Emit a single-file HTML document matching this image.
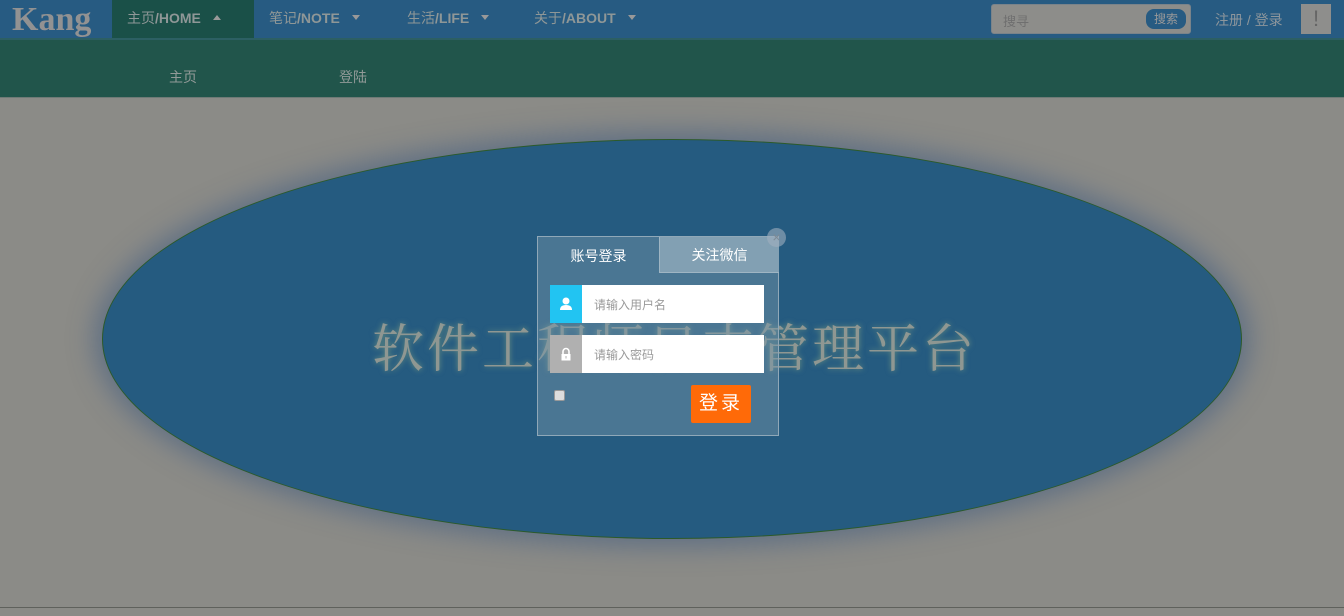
<!DOCTYPE html>
<html><head><meta charset="utf-8"><style>
*{margin:0;padding:0;box-sizing:border-box}
body{width:1344px;height:616px;overflow:hidden;background:#8b8b87;font-family:"Liberation Sans","Noto Sans CJK SC",sans-serif;position:relative}
.top{position:absolute;left:0;top:0;width:1344px;height:38px;background:#275b82}
.top .line{position:absolute;left:0;top:38px;width:1344px;height:2px;background:#2c5f63}
.logo{position:absolute;left:12px;top:0;font:bold 34px "Liberation Serif",serif;color:#929292;line-height:40px}
.nav{position:absolute;top:0;height:38px;line-height:36px;font-size:14px;color:#8f9797;font-weight:bold}
.nav b{font-weight:normal}
.tri{display:inline-block;width:0;height:0;border-left:4px solid transparent;border-right:4px solid transparent;border-top:5px solid #999;margin-left:12px;vertical-align:3px}
.up{border-top:none;border-bottom:5px solid #999}
.sub{position:absolute;left:0;top:40px;width:1344px;height:58px;background:#21554b;border-bottom:1px solid #6e7a76}
.sub span{position:absolute;top:27px;font-size:14px;color:#929a98}
.search{position:absolute;left:991px;top:4px;width:200px;height:30px;background:#8d8d8a;border:1px solid #7a838a;border-radius:3px}
.search span{position:absolute;left:11px;top:6px;font-size:13px;color:#6f6f6f}
.search i{position:absolute;right:4px;top:4px;width:40px;height:20px;border-radius:8px;background:#275b82;color:#999;font-style:normal;font-size:12px;text-align:center;line-height:20px}
.reg{position:absolute;left:1215px;top:10px;font-size:14px;color:#8d969c}
.ex{position:absolute;left:1301px;top:4px;width:30px;height:30px;background:#8e8e8c;color:#666;font-size:22px;text-align:center;line-height:30px}
.ell{position:absolute;left:102px;top:139px;width:1140px;height:400px;border-radius:50%;background:#255b80;border:1px solid #2c5a2a;box-shadow:0 0 25px 8px rgba(60,90,130,.55)}
.title{position:absolute;left:372px;top:307px;font-size:52px;color:#8f9792;letter-spacing:3px;font-family:"Noto Serif CJK SC",serif;text-shadow:0 0 6px rgba(140,170,130,.7)}
.box{position:absolute;left:537px;top:236px;width:242px;height:200px;background:rgba(120,150,170,.45);border:1px solid #90a8b8}
.t1{position:absolute;left:0;top:0;width:121px;height:36px;color:#fff;font-size:14px;text-align:center;line-height:38px}
.t2{position:absolute;left:121px;top:0;width:120px;height:36px;background:#82a0b3;border-left:1px solid #9fb5c3;border-bottom:1px solid #9fb5c3;color:#fff;font-size:14px;text-align:center;line-height:36px}
.in{position:absolute;left:12px;width:214px;height:38px;background:#fff}
.in .ic{position:absolute;left:0;top:0;width:32px;height:38px}
.in span{position:absolute;left:44px;top:11px;font-size:12px;color:#9a9a9a}
.btn{position:absolute;left:153px;top:148px;width:60px;height:38px;background:#ff6a08;border-radius:2px;color:#fff;font-size:19px;text-align:center;line-height:38px;letter-spacing:3px}
.cb{position:absolute;left:16px;top:153px;width:11px;height:11px;background:#ddd;border:1px solid #999;border-radius:2px}
.x{position:absolute;left:767px;top:228px;width:19px;height:19px;border-radius:50%;background:rgba(160,175,190,.6);color:#7d8a95;font-size:14px;text-align:center;line-height:19px}
.bl{position:absolute;left:0;top:607px;width:1344px;height:1px;background:#5f615c}
</style></head><body>
<div class="top"><div class="line"></div>
<div class="logo">Kang</div>
<div class="nav" style="left:112px;width:142px;background:#1a5048;padding-left:15px"><b>主页</b>/HOME<i class="tri up"></i></div>
<div class="nav" style="left:269px"><b>笔记</b>/NOTE<i class="tri"></i></div>
<div class="nav" style="left:407px"><b>生活</b>/LIFE<i class="tri"></i></div>
<div class="nav" style="left:534px"><b>关于</b>/ABOUT<i class="tri"></i></div>
<div class="search"><span>搜寻</span><i>搜索</i></div>
<div class="reg">注册 / 登录</div>
<div class="ex">!</div>
</div>
<div class="sub"><span style="left:169px">主页</span><span style="left:339px">登陆</span></div>
<div class="ell"></div>
<div class="title">软件工程师日志管理平台</div>
<div class="box">
<div class="t1">账号登录</div><div class="t2">关注微信</div>
<div class="in" style="top:48px"><div class="ic" style="background:#22c4f2"><svg width="32" height="38" viewBox="0 0 32 38"><circle cx="16" cy="16" r="3.5" fill="#fff"/><path d="M10 25 Q10 20 16 20 Q22 20 22 25Z" fill="#fff"/></svg></div><span>请输入用户名</span></div>
<div class="in" style="top:98px"><div class="ic" style="background:#b0b0b0"><svg width="32" height="38" viewBox="0 0 32 38"><path d="M13 19v-2.5a3 3 0 0 1 6 0V19" stroke="#fff" stroke-width="1.6" fill="none"/><rect x="11.5" y="19" width="9" height="6.5" fill="#fff"/><rect x="15.5" y="21" width="1" height="2.5" fill="#b0b0b0"/></svg></div><span>请输入密码</span></div>
<div class="cb"></div>
<div class="btn">登录</div>
</div>
<div class="x">×</div>
<div class="bl"></div>
</body></html>
